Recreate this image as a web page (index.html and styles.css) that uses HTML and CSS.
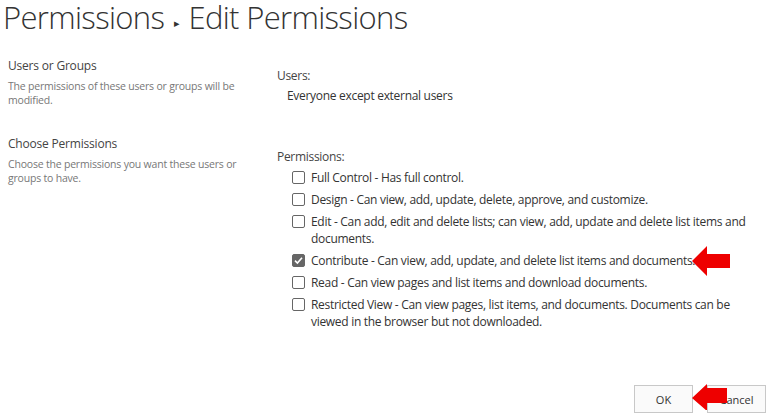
FILE: index.html
```html
<!DOCTYPE html>
<html>
<head>
<meta charset="utf-8">
<link rel="stylesheet" href="styles.css">
</head>
<body>
<div class="page">
  <h1 class="title">Permissions <span class="crumb-sep">&#9656;</span> Edit Permissions</h1>
  <div class="form">
    <div class="section">
      <div class="label-col">
        <div class="sec-title">Users or Groups</div>
        <div class="sec-desc">The permissions of these users or groups will be modified.</div>
      </div>
      <div class="field-col users">
        <div class="field-label">Users:</div>
        <div class="field-value">Everyone except external users</div>
      </div>
    </div>
    <div class="section">
      <div class="label-col">
        <div class="sec-title">Choose Permissions</div>
        <div class="sec-desc">Choose the permissions you want these users or groups to have.</div>
      </div>
      <div class="field-col perms">
        <div class="field-label">Permissions:</div>
        <ul class="perm-list">
          <li class="perm"><span class="cb"></span><span class="perm-text">Full Control - Has full control.</span></li>
          <li class="perm"><span class="cb"></span><span class="perm-text">Design - Can view, add, update, delete, approve, and customize.</span></li>
          <li class="perm"><span class="cb"></span><span class="perm-text">Edit - Can add, edit and delete lists; can view, add, update and delete list items and documents.</span></li>
          <li class="perm"><span class="cb checked"><svg viewBox="0 0 13 13" width="13" height="13"><path d="M3 6.6 L5.4 9 L10 3.8" fill="none" stroke="#fff" stroke-width="1.6"/></svg></span><span class="perm-text">Contribute - Can view, add, update, and delete list items and documents.<span class="arrow arrow-1"><svg viewBox="0 0 38 30" width="38" height="30"><path d="M0 15 L15 0 L15 8 L38 8 L38 22 L15 22 L15 30 Z" fill="#ee0000"/></svg></span></span></li>
          <li class="perm"><span class="cb"></span><span class="perm-text">Read - Can view pages and list items and download documents.</span></li>
          <li class="perm"><span class="cb"></span><span class="perm-text">Restricted View - Can view pages, list items, and documents. Documents can be viewed in the browser but not downloaded.</span></li>
        </ul>
      </div>
    </div>
  </div>
  <div class="buttons">
    <button class="btn ok">OK<span class="arrow arrow-2"><svg viewBox="0 0 35 26" width="35" height="26"><path d="M0 14 L15 0 L15 4 L35 4 L35 19 L15 19 L15 27 Z" fill="#ee0000"/></svg></span></button>
    <button class="btn">Cancel</button>
  </div>
</div>
</body>
</html>
```
FILE: styles.css
```css
html, body {
  margin: 0;
  padding: 0;
  background: #fff;
}
body {
  font-family: "Open Sans", "Noto Sans", sans-serif;
  color: #333;
  width: 772px;
  height: 420px;
  overflow: hidden;
}
.page {
  padding: 0 0 0 8px;
}
.title {
  margin: 0 0 0 -5px;
  font-weight: 300;
  font-size: 31px;
  line-height: 34px;
  color: #333;
  letter-spacing: -0.65px;
  white-space: nowrap;
}
.crumb-sep {
  font-size: 11px;
  vertical-align: middle;
  position: relative;
  top: 2px;
  margin: 0 2px;
  color: #333;
}
.form {
  margin-top: 19px;
}
.section {
  display: flex;
}
.label-col {
  width: 240px;
  flex: none;
}
.sec-title {
  font-size: 12px;
  line-height: 17px;
  color: #444;
  letter-spacing: -0.2px;
}
.sec-desc {
  margin-top: 5px;
  font-size: 10.5px;
  line-height: 14px;
  color: #777;
  width: 234px;
  letter-spacing: -0.2px;
}
.field-col {
  margin-left: 29px;
  flex: 1;
}
.users {
  padding-top: 10px;
  height: 68px;
}
.field-label {
  font-size: 12px;
  line-height: 17px;
  color: #444;
  letter-spacing: -0.3px;
}
.field-value {
  margin-left: 10px;
  margin-top: 3px;
  font-size: 12px;
  line-height: 17px;
  color: #333;
  letter-spacing: -0.3px;
}
.perms {
  padding-top: 13px;
}
.perm-list {
  list-style: none;
  margin: 4px 0 0 15px;
  padding: 0;
}
.perm {
  display: flex;
  align-items: flex-start;
  margin-bottom: 5px;
  font-size: 12px;
  line-height: 17px;
  color: #333;
  letter-spacing: -0.3px;
}
.cb {
  flex: none;
  width: 11px;
  height: 11px;
  border: 1px solid #666;
  border-radius: 2px;
  margin: 2px 6px 0 0;
  position: relative;
}
.cb svg {
  position: absolute;
  left: -1px;
  top: -1px;
}
.cb.checked {
  background: #666;
  border-color: #666;
}
.perm-text {
  width: 450px;
  position: relative;
}
.arrow {
  position: absolute;
  line-height: 0;
  z-index: 2;
}
.arrow-1 {
  margin-left: -3px;
  margin-top: -6px;
}
.buttons {
  position: absolute;
  left: 634px;
  top: 385px;
  display: flex;
  gap: 14px;
}
.btn {
  width: 59px;
  height: 28px;
  border: 1px solid #c8c8c8;
  background: #fafafa;
  font-family: "Open Sans", "Noto Sans", sans-serif;
  font-size: 11px;
  color: #333;
  padding: 0;
  position: relative;
}
.ok {
  z-index: 2;
}
.arrow-2 {
  left: 57px;
  top: -2px;
}
```
